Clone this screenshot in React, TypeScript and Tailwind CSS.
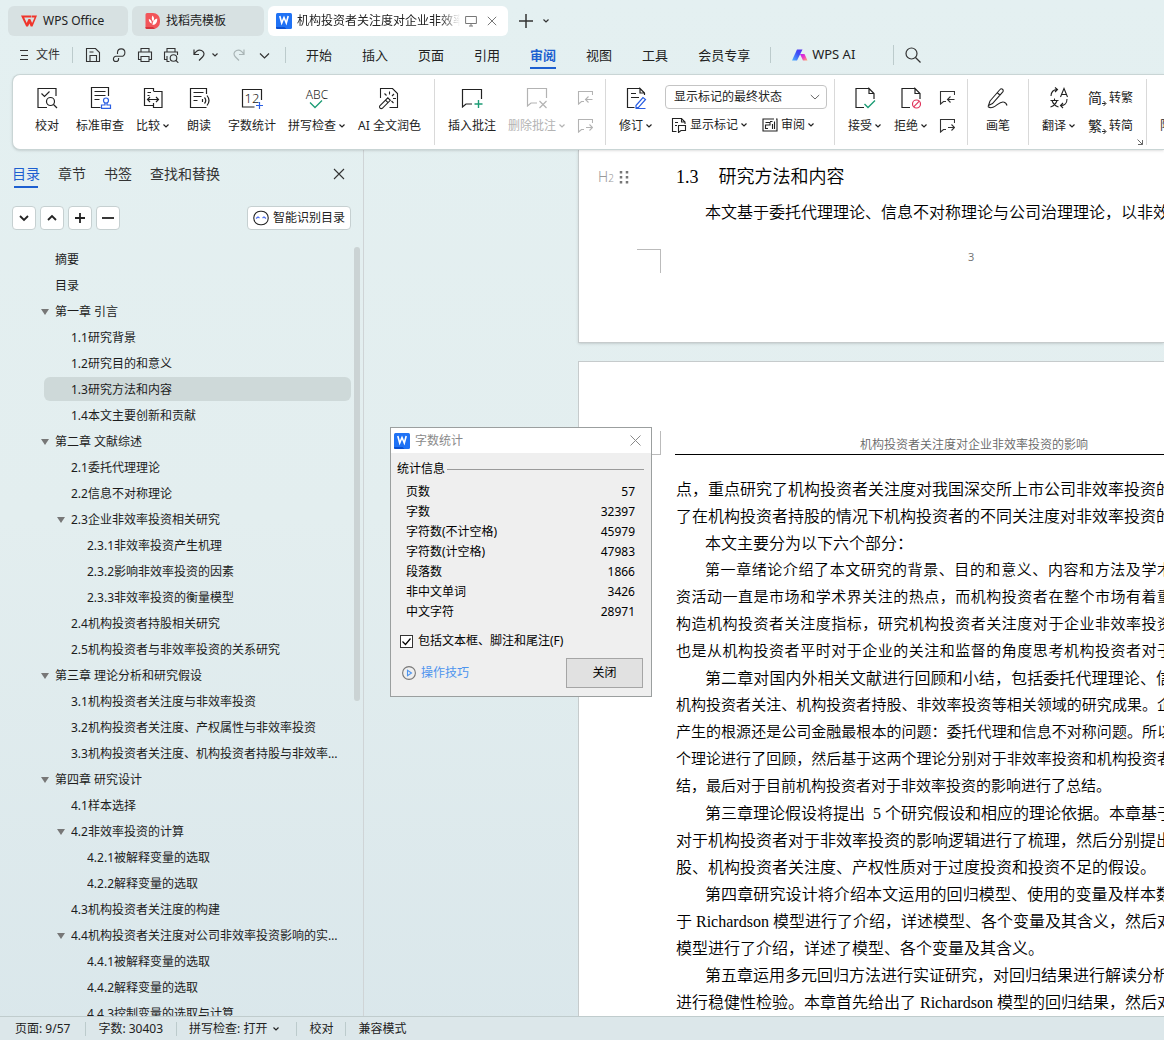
import React from "react";

const UI = "font-['Noto_Sans','Noto_Sans_CJK_SC',sans-serif]";
const SONG = "font-['Liberation_Serif','Noto_Sans_CJK_SC',serif]";

function Svg({ s = 24, className = "", children }: { s?: number; className?: string; children: React.ReactNode }) {
  return (
    <svg
      width={s}
      height={s}
      viewBox={`0 0 ${s} ${s}`}
      fill="none"
      stroke="currentColor"
      strokeWidth="1.2"
      className={"block shrink-0 " + className}
      aria-hidden="true"
    >
      {children}
    </svg>
  );
}

const Chevron = ({ className = "" }: { className?: string }) => (
  <svg width="8" height="6" viewBox="0 0 8 6" fill="none" stroke="currentColor" strokeWidth="1.2" className={"shrink-0 " + className} aria-hidden="true">
    <path d="M1.5 1.5 4 4 6.5 1.5" />
  </svg>
);

const WordLogo = () => (
  <svg width="16" height="16" viewBox="0 0 16 16" className="block shrink-0" aria-hidden="true">
    <rect width="16" height="16" rx="1.5" fill="#1f72f5" />
    <path d="M0 14h8.500l2 2H1.500A1.500 1.500 0 0 1 0 14.500z" fill="#0a50d0" />
    <path d="M3.800 3 5.700 10 8 4.500 10.300 10 12.200 3" fill="none" stroke="#fff" strokeWidth="1.600" />
  </svg>
);

/* ---------- title tabs ---------- */
function TitleTabs() {
  return (
    <div className="flex items-center pt-1.5 pl-2 text-xs text-[#222]">
      <button className="flex h-[30px] w-[120px] items-center rounded-md bg-[#d7e1e2] pl-[13px]">
        <svg width="16" height="12" viewBox="0 0 16 12" aria-hidden="true">
          <path d="M0 .5h10.500v2H3.200l2.500 5.500 1.800-4h1.800l1.800 4 2.500-5.500H11v-2h5l-4.500 11h-1.800L8.400 8.500 7 11.500H5.200z" fill="#f0352b" />
        </svg>
        <span className="ml-[6px]">WPS Office</span>
      </button>
      <button className="ml-1 flex h-[30px] w-[132px] items-center rounded-md bg-[#d7e1e2] pl-[13px]">
        <svg width="16" height="16" viewBox="0 0 16 16" aria-hidden="true">
          <path d="M2 0h6a7 7 0 0 1 7 7v2a7 7 0 0 1-7 7H2a1.500 1.500 0 0 1-1.500-1.500v-13A1.500 1.500 0 0 1 2 0z" fill="#f2555a" />
          <path d="M.5 14H8l2 2H2a1.500 1.500 0 0 1-1.500-1.500z" fill="#d4343c" />
          <path d="M7.500 2.500c2 2 2 4 .5 6-1.500-2-1.500-4-.5-6zM3.800 6c2 .5 3 2 3 4.500C5 10 3.800 8.500 3.800 6zM12.200 5.500c.3 3.500-1.200 6.500-4.700 6.500 0-3.500 1.700-5.800 4.700-6.500z" fill="#fff" />
        </svg>
        <span className="ml-[5px]">找稻壳模板</span>
      </button>
      <div className="ml-1 flex h-[30px] w-60 items-center rounded-md bg-white pl-2">
        <WordLogo />
        <span className="ml-[5px] w-[163px] overflow-hidden whitespace-nowrap [mask-image:linear-gradient(to_right,#000_88%,transparent)]">
          机构投资者关注度对企业非效率投资的影响
        </span>
        <Svg s={12} className="ml-[5px] text-[#777]">
          <path d="M.6 1.500h10.800v7H.6zM4 11h4M6 8.500V11" strokeWidth="1" />
        </Svg>
        <button aria-label="关闭标签" className="ml-[10px] text-[#777]">
          <Svg s={10}><path d="m.8.8 8.400 8.400M9.200.8.8 9.200" strokeWidth="1" /></Svg>
        </button>
      </div>
      <button aria-label="新建" className="ml-[11px] text-[#333]">
        <Svg s={14}><path d="M7 0v14M0 7h14" strokeWidth="1.500" /></Svg>
      </button>
      <button aria-label="标签列表" className="ml-[9px] text-[#333]"><Chevron /></button>
    </div>
  );
}

/* ---------- menu row ---------- */
const Sep = ({ className }: { className: string }) => <div className={"w-px shrink-0 bg-[#bccbcc] " + className} />;

function MenuRow() {
  const tabs = ["开始", "插入", "页面", "引用", "审阅", "视图", "工具", "会员专享"];
  return (
    <div className="flex h-[38px] shrink-0 items-center pl-5 text-[#333]">
      <button className="flex items-center gap-[6px] text-xs">
        <Svg s={10}><path d="M0 .5h8M1 5.500h7M0 9.500h8" strokeWidth="1" /></Svg>
        文件
      </button>
      <Sep className="mr-3 ml-3 h-4" />
      <div className="flex items-center gap-[10px]">
        <button aria-label="保存">
          <Svg s={16}><path d="M1.500 1.500h9l4 4v9h-13zM5 14.500V8.500h6.500v6M4.500 5h4" strokeWidth="1.100" /></Svg>
        </button>
        <button aria-label="输出为PDF">
          <Svg s={16}><path d="M6.500 7V5.300a3.700 3.700 0 1 1 3.700 4H5a2.600 2.600 0 1 0 2.600 2.600v-1" strokeWidth="1.100" /></Svg>
        </button>
        <button aria-label="打印">
          <Svg s={16}><path d="M4 5V1.500h8V5M4 12.500H1.500V5h13v7.500H12M4 9.500h8v5H4z" strokeWidth="1.100" /></Svg>
        </button>
        <button aria-label="打印预览">
          <Svg s={16}><path d="M4 5V1.500h8V5M4 12.500H1.500V5h13v3M4 9v5.500h2.500" strokeWidth="1.100" /><circle cx="10.500" cy="11" r="3.300" strokeWidth="1.100" /><path d="m13 13.500 2.300 2.300" strokeWidth="1.100" /></Svg>
        </button>
      </div>
      <button aria-label="撤销" className="ml-[14px] flex items-center gap-[6px]">
        <Svg s={12}><path d="M1 .5v5h5M1 5.500C3 2 6 .5 8.500 1.500s3.500 4 1 6.500L6 11.500" strokeWidth="1.200" /></Svg>
        <Chevron />
      </button>
      <button aria-label="恢复" className="ml-[14px] text-[#a9b5b6]">
        <Svg s={12}><path d="M11 .5v5H6M11 5.500C9 2 6 .5 3.500 1.500S0 5.500 2.500 8L6 11.500" strokeWidth="1.200" /></Svg>
      </button>
      <button aria-label="更多" className="ml-[14px]">
        <Svg s={11}><path d="m1 3.500 4.500 4.500L10 3.500" /></Svg>
      </button>
      <Sep className="ml-[15px] h-4" />
      <nav className="ml-5 flex gap-[30px] text-[13px] leading-5">
        {tabs.map((t) => (
          <button
            key={t}
            className={
              t === "审阅"
                ? "relative font-bold text-[#1d5fd0] after:absolute after:inset-x-0 after:top-[22px] after:h-[2px] after:bg-[#1d5fd0]"
                : "relative text-[#222]"
            }
          >
            {t}
          </button>
        ))}
      </nav>
      <Sep className="ml-5 h-4" />
      <button className="ml-[21px] flex items-center gap-1 text-[13px] text-[#222]">
        <svg width="16" height="12" viewBox="0 0 16 12" aria-hidden="true">
          <defs>
            <linearGradient id="ai1" x1="0" y1="1" x2="1" y2="0"><stop stopColor="#4fb4ff" /><stop offset=".6" stopColor="#3f4df5" /><stop offset="1" stopColor="#5a2df0" /></linearGradient>
            <linearGradient id="ai2" x1="0" y1="0" x2="1" y2="1"><stop stopColor="#b41cf5" /><stop offset=".5" stopColor="#f03cc0" /><stop offset="1" stopColor="#ffb070" /></linearGradient>
          </defs>
          <path d="M5 .5h5.500L5 11.500H0z" fill="url(#ai1)" />
          <path d="M8 5h4.500l3 6.500h-4.500z" fill="url(#ai2)" />
        </svg>
        WPS AI
      </button>
      <Sep className="ml-[38px] h-5" />
      <button aria-label="搜索" className="ml-[11px]">
        <Svg s={16}><circle cx="6.500" cy="6.500" r="5.500" /><path d="m10.500 10.500 5 5" /></Svg>
      </button>
    </div>
  );
}

/* ---------- ribbon ---------- */
function Tool({ label, drop, dim, children }: { label: string; drop?: boolean; dim?: boolean; children: React.ReactNode }) {
  return (
    <button
      className={
        "flex min-w-[46px] shrink-0 flex-col items-center gap-2 px-[6px] pt-[11px] text-xs leading-4 whitespace-nowrap " +
        (dim ? "text-[#b3b3b3]" : "text-[#222]")
      }
    >
      <Svg>{children}</Svg>
      <span className="flex items-center gap-[2px]">
        {label}
        {drop && <Chevron />}
      </span>
    </button>
  );
}

const GroupSep = () => <div className="mx-[7px] mt-1 h-[66px] w-px shrink-0 bg-[#d9d9d9]" />;

const bubble = "M13.500 3H1.500v13.500l3.500-3H7";
const PrevNext = ({ dim }: { dim?: boolean }) => (
  <div className={"flex shrink-0 flex-col gap-3 px-[5px] pt-[15px] " + (dim ? "text-[#b3b3b3]" : "text-[#333]")}>
    <button aria-label="上一条"><Svg s={16}><path d="M15.500 5V1.500h-14V14l3-2.500H7M15.500 9.500H9m2.500-3-3 3 3 3" strokeWidth="1.100" /></Svg></button>
    <button aria-label="下一条"><Svg s={16}><path d="M15.500 5V1.500h-14V14l3-2.500H7M9 9.500h6m-2.500-3 3 3-3 3" strokeWidth="1.100" /></Svg></button>
  </div>
);

function Convert({ glyph, label }: { glyph: string; label: string }) {
  return (
    <button className="flex items-center">
      <span className="w-[14px] text-sm leading-4">{glyph}</span>
      <svg width="7" height="16" viewBox="0 0 7 16" fill="none" stroke="currentColor" className="shrink-0" aria-hidden="true">
        <path d="M-1 13.500h4.500M1.500 11l2.500 2.500L1.500 16" />
      </svg>
      <span className="whitespace-nowrap">{label}</span>
    </button>
  );
}

const docPath = "M16 2.500H3v19h8M21 13V7.500l-5-5v5h5";

function Ribbon() {
  return (
    <div className="relative z-10 ml-3 flex h-[76px] shrink-0 overflow-hidden rounded-l-lg border border-r-0 border-[#c9d5d5] bg-white pl-[11px] shadow-sm">
      <Tool label="校对">
        <path d="M21 10V2.500H3v19h9" /><path d="m6.500 7.500 3 3 5-5" /><circle cx="15.500" cy="15.500" r="4" /><path d="m18.500 18.500 3.500 3.500" />
      </Tool>
      <Tool label="标准审查">
        <path d="M20.500 10V1.500h-17v20h9M6.500 5.500h11M6.500 9.500h11M6.500 13.500h5" />
        <g stroke="#2b5fe3"><circle cx="18" cy="14.500" r="2.500" /><path d="M17 17v2h-3.500v3.300h9V19H19v-2" /></g>
      </Tool>
      <Tool label="比较" drop>
        <path d="M12.500 5V2.500h-9v17h9M12.500 5.500h8.500v16h-8.500V17M6.500 6.500h3.500M6.500 9.500h2M6.500 13.500h11M9 11l-2.500 2.500L9 16M15 11l2.500 2.500L15 16" />
      </Tool>
      <Tool label="朗读">
        <path d="M19.500 8V2.500h-16v19h16M6.500 6.500h10M6.500 10.500h8M6.500 14.500h4M15.500 13v3M17.500 11.500q2.500 3 0 6M20 9.500q4 5 0 10" />
      </Tool>
      <Tool label="字数统计">
        <path d="M21.500 14V3.500h-19V21h12" />
        <path d="M19.500 16v7M16 19.500h7" stroke="#2b5fe3" />
        <text x="4.500" y="16.500" fontSize="13" fontWeight="300" fill="currentColor" stroke="none">12</text>
      </Tool>
      <Tool label="拼写检查" drop>
        <text x="12" y="13" textAnchor="middle" fontSize="12" fontWeight="300" fill="currentColor" stroke="none">ABC</text>
        <path d="m5 16.500 5 5 7-7" stroke="#1c9c75" strokeWidth="1.300" />
      </Tool>
      <Tool label="AI 全文润色">
        <path d="M3.500 12V2.500h12l5 5v14h-8M2.800 19.800l8-8 2.500 2.500-8 8a1.800 1.800 0 0 1-2.500-2.500zM12.500 5.500v3M7.500 7.500l2 2M17 8l-2 2M16 12.500h3M14.500 15l2 2M8.500 14.200l2.500 2.500" strokeWidth="1.100" />
      </Tool>
      <GroupSep />
      <Tool label="插入批注">
        <path d="M21.500 13V3.500h-19v17.500l3.500-3h6" /><path d="M18.500 14v8M14.500 18h8" stroke="#1c9c75" strokeWidth="1.400" />
      </Tool>
      <Tool label="删除批注" drop dim>
        <path d="M21.500 12V2.500h-19v17.500l3.500-3h6M14.500 15l7 7M21.500 15l-7 7" />
      </Tool>
      <PrevNext dim />
      <GroupSep />
      <Tool label="修订" drop>
        <path d="M16 2.500H3.500v19h7M20.500 9V7l-4.500-4.500V7h4.500M7 7.500h5M7 11.500h8" />
        <path d="m12 19.500 7-8 2.500 2-7 8H12zM11.500 22.500h10" stroke="#2b5fe3" />
      </Tool>
      <div className="flex shrink-0 flex-col gap-2 px-[6px] pt-[10px] text-xs leading-4 text-[#222]">
        <div className="relative flex items-center">
          <select aria-label="显示标记状态" className="h-6 w-[162px] appearance-none rounded-[4px] border border-[#c4c4c4] bg-white pl-2 text-xs leading-4">
            <option>显示标记的最终状态</option>
          </select>
          <Svg s={10} className="pointer-events-none absolute right-[7px] text-[#666]"><path d="m.8 3 4.200 4L9.200 3" strokeWidth="1" /></Svg>
        </div>
        <div className="flex gap-[14px] pl-[6px]">
          <button className="flex items-center">
            <Svg s={16}><path d="M5.500 14.500h-4v-13h9l3.500 3.500v2M10.500 1.500V5H14M4 5.500h3M4 8.500h2M7.500 8.500h7v5h-4.500l-2.500 2z" strokeWidth="1.100" /></Svg>
            <span className="mr-[2px] ml-[3px]">显示标记</span><Chevron />
          </button>
          <button className="flex items-center">
            <Svg s={16}><path d="M12 2H1v12h14V2h-1M3.500 5.500H8V8H3.500v3.500H6M10.500 4.500H8M12.500 4.500v7.500M10.500 7v5" strokeWidth="1.100" /></Svg>
            <span className="mr-[2px] ml-[3px]">审阅</span><Chevron />
          </button>
        </div>
      </div>
      <div className="mt-1 mr-[7px] ml-px h-[66px] w-px shrink-0 bg-[#d9d9d9]" />
      <Tool label="接受" drop>
        <path d={docPath} /><path d="m11.500 18 3.500 3.500 7-7" stroke="#1c9c75" strokeWidth="1.400" />
      </Tool>
      <Tool label="拒绝" drop>
        <path d={docPath} /><g stroke="#e0355c"><circle cx="17.500" cy="18" r="4" /><path d="m14.700 20.800 5.600-5.600" /></g>
      </Tool>
      <PrevNext />
      <GroupSep />
      <Tool label="画笔">
        <path d="M4 15 14 3.500a1.800 1.800 0 0 1 2.800 2.300L6.500 17.500l-4 2zM2 20.500c1.500 1.500 3 1.500 5 .8 4-1.500 6.500-6 10.500-5.300 2 .3 3 1.800 3.500 3.500M11.500 7l2.500 2" strokeWidth="1.100" />
      </Tool>
      <GroupSep />
      <Tool label="翻译" drop>
        <path d="M4 10c0-4 2.500-6.500 6-6.500M8 1.500l2.500 2L8 6M13.500 11 17 2.500l3.500 8.500M14.700 8.500h4.600M3.500 14.500h8M7.500 12.500v2M10 14.500c-1 3.500-3.500 5.500-6.500 6.500M5 14.500c1 3.500 3.500 5.500 6.500 6.500M20 13c0 4-2.500 6.500-6 6.500M16 17l-2.500 2.500L16 22" strokeWidth="1.100" />
      </Tool>
      <div className="flex shrink-0 flex-col gap-3 pt-[15px] pr-[13px] pl-[6px] text-xs leading-4 text-[#222]">
        <Convert glyph="简" label="转繁" />
        <Convert glyph="繁" label="转简" />
      </div>
      <div className="relative mt-1 h-[66px] w-px shrink-0 bg-[#d9d9d9]">
        <Svg s={6} className="absolute right-[4px] bottom-0 text-[#666]"><path d="m.5.5 5 5M5.500 1v4.500H1" strokeWidth="1" /></Svg>
      </div>
      <div className="w-[7px] shrink-0" />
      <Tool label="限制编辑"><path d={bubble} className="invisible" /></Tool>
    </div>
  );
}

/* ---------- outline pane ---------- */
type Entry = { t: string; l: number; open?: boolean };
const entries: Entry[] = [
  { t: "摘要", l: 0 },
  { t: "目录", l: 0 },
  { t: "第一章 引言", l: 0, open: true },
  { t: "1.1研究背景", l: 1 },
  { t: "1.2研究目的和意义", l: 1 },
  { t: "1.3研究方法和内容", l: 1 },
  { t: "1.4本文主要创新和贡献", l: 1 },
  { t: "第二章 文献综述", l: 0, open: true },
  { t: "2.1委托代理理论", l: 1 },
  { t: "2.2信息不对称理论", l: 1 },
  { t: "2.3企业非效率投资相关研究", l: 1, open: true },
  { t: "2.3.1非效率投资产生机理", l: 2 },
  { t: "2.3.2影响非效率投资的因素", l: 2 },
  { t: "2.3.3非效率投资的衡量模型", l: 2 },
  { t: "2.4机构投资者持股相关研究", l: 1 },
  { t: "2.5机构投资者与非效率投资的关系研究", l: 1 },
  { t: "第三章 理论分析和研究假设", l: 0, open: true },
  { t: "3.1机构投资者关注度与非效率投资", l: 1 },
  { t: "3.2机构投资者关注度、产权属性与非效率投资", l: 1 },
  { t: "3.3机构投资者关注度、机构投资者持股与非效率投资", l: 1 },
  { t: "第四章 研究设计", l: 0, open: true },
  { t: "4.1样本选择", l: 1 },
  { t: "4.2非效率投资的计算", l: 1, open: true },
  { t: "4.2.1被解释变量的选取", l: 2 },
  { t: "4.2.2解释变量的选取", l: 2 },
  { t: "4.3机构投资者关注度的构建", l: 1 },
  { t: "4.4机构投资者关注度对公司非效率投资影响的实证研究", l: 1, open: true },
  { t: "4.4.1被解释变量的选取", l: 2 },
  { t: "4.4.2解释变量的选取", l: 2 },
  { t: "4.4.3控制变量的选取与计算", l: 2 },
];
const indent = ["pl-0", "pl-4", "pl-8"];

function Outline() {
  const box = "flex h-6 w-6 items-center justify-center rounded-[4px] border border-[#c6d0d1] bg-white text-[#222]";
  return (
    <aside className="flex w-[364px] shrink-0 flex-col border-r border-[#cfd4d6]">
      <div className="flex items-center gap-[18px] pt-[14px] pr-[18px] pl-3 text-sm leading-5 text-[#333]">
        <button className="relative text-[#1d5fd0] after:absolute after:inset-x-[2px] after:top-[22px] after:h-[2px] after:bg-[#1d5fd0]">目录</button>
        <button>章节</button>
        <button>书签</button>
        <button>查找和替换</button>
        <button aria-label="关闭窗格" className="ml-auto"><Svg s={12}><path d="m1 1 10 10M11 1 1 11" strokeWidth="1.100" /></Svg></button>
      </div>
      <div className="mt-[22px] flex gap-1 pr-3 pl-3">
        <button aria-label="展开" className={box}><Svg s={10}><path d="m1 3 4 4 4-4" strokeWidth="1.800" /></Svg></button>
        <button aria-label="收起" className={box}><Svg s={10}><path d="m1 7 4-4 4 4" strokeWidth="1.800" /></Svg></button>
        <button aria-label="提升" className={box}><Svg s={10}><path d="M0 5h10M5 0v10" strokeWidth="1.800" /></Svg></button>
        <button aria-label="降低" className={box}><Svg s={12}><path d="M0 6h12" strokeWidth="1.800" /></Svg></button>
        <button className="ml-auto flex h-6 items-center gap-1 rounded-[4px] border border-[#c6d0d1] bg-white px-[5px] text-xs text-[#222]">
          <Svg s={16}><rect x=".8" y="1.300" width="14.400" height="13.400" rx="6.500" strokeWidth="1.100" /><path d="M3 8.500 5 7l1.500 1M9.500 8 11 7l2 1.500" stroke="#4a6cf0" /></Svg>
          智能识别目录
        </button>
      </div>
      <div className="mt-[17px] flex min-h-0 flex-1 overflow-hidden pl-[39px]">
        <ul className="min-w-0 flex-1 text-xs leading-[26px] text-[#1c1c1c]">
          {entries.map((e) => (
            <li key={e.t} className={indent[e.l]}>
              <button
                className={
                  "relative flex w-full items-center text-left " +
                  (e.t.startsWith("1.3")
                    ? "before:absolute before:top-0 before:right-0 before:bottom-[2px] before:-left-[11px] before:rounded-md before:bg-[#ced9d9]"
                    : "")
                }
              >
                <span className="flex w-4 shrink-0">
                  {e.open && <svg width="8" height="6" viewBox="0 0 8 6" className="ml-[2px]" aria-hidden="true"><path d="M0 0h8L4 6z" fill="#777" /></svg>}
                </span>
                <span className="relative mr-[6px] truncate">{e.t}</span>
              </button>
            </li>
          ))}
        </ul>
        <div className="mr-[3px] ml-[3px] h-[454px] w-[6px] rounded-full bg-[#cbd3d4]" />
      </div>
    </aside>
  );
}

/* ---------- document ---------- */
type Line = { t: string; kind: "full" | "tight" | "end" | "tightEnd"; first?: boolean };
const lines: Line[] = [
  { t: "点,重点研究了机构投资者关注度对我国深交所上市公司非效率投资的", kind: "full" },
  { t: "了在机构投资者持股的情况下机构投资者的不同关注度对非效率投资的", kind: "full" },
  { t: "本文主要分为以下六个部分:", kind: "end", first: true },
  { t: "第一章绪论介绍了本文研究的背景、目的和意义、内容和方法及学术", kind: "tight", first: true },
  { t: "资活动一直是市场和学术界关注的热点,而机构投资者在整个市场有着重", kind: "tight" },
  { t: "构造机构投资者关注度指标,研究机构投资者关注度对于企业非效率投资", kind: "tight" },
  { t: "也是从机构投资者平时对于企业的关注和监督的角度思考机构投资者对于", kind: "tight" },
  { t: "第二章对国内外相关文献进行回顾和小结,包括委托代理理论、信", kind: "full", first: true },
  { t: "机构投资者关注、机构投资者持股、非效率投资等相关领域的研究成果。企", kind: "tight" },
  { t: "产生的根源还是公司金融最根本的问题:委托代理和信息不对称问题。所以", kind: "tight" },
  { t: "个理论进行了回顾,然后基于这两个理论分别对于非效率投资和机构投资者", kind: "tight" },
  { t: "结,最后对于目前机构投资者对于非效率投资的影响进行了总结。", kind: "tightEnd" },
  { t: "第三章理论假设将提出  5 个研究假设和相应的理论依据。本章基于", kind: "full", first: true },
  { t: "对于机构投资者对于非效率投资的影响逻辑进行了梳理,然后分别提出", kind: "full" },
  { t: "股、机构投资者关注度、产权性质对于过度投资和投资不足的假设。", kind: "end" },
  { t: "第四章研究设计将介绍本文运用的回归模型、使用的变量及样本数", kind: "full", first: true },
  { t: "于 Richardson 模型进行了介绍,详述模型、各个变量及其含义,然后对", kind: "full" },
  { t: "模型进行了介绍,详述了模型、各个变量及其含义。", kind: "end" },
  { t: "第五章运用多元回归方法进行实证研究,对回归结果进行解读分析,", kind: "full", first: true },
  { t: "进行稳健性检验。本章首先给出了 Richardson 模型的回归结果,然后对", kind: "full" },
];
const kinds = {
  full: "text-base leading-[27px] [text-align-last:justify]",
  tight: "text-[15px] leading-[27px] [text-align-last:justify]",
  end: "text-base leading-[27px]",
  tightEnd: "text-[15px] leading-[27px]",
};
const wide = (s: string) => s.replace(/,/g, "\uff0c").replace(/:/g, "\uff1a");

function Document() {
  return (
    <main className="flex min-w-0 flex-1 flex-col overflow-hidden pl-[214px]">
      <section className="flex h-[193px] shrink-0 flex-col border-b border-l border-[#c6cbcc] bg-white shadow-sm">
        <div className="flex items-center pt-[15px] pl-[19px] leading-6">
          <span className="flex w-[78px] items-center gap-[3px] text-sm text-[#999]">
            <span className="font-light">H<sub className="bottom-0 text-[10px]">2</sub></span>
            <Svg s={14}><path d="M4 1v13M10 1v13" strokeWidth="2.500" strokeDasharray="2.500 2.500" stroke="#777" /></Svg>
          </span>
          <h2 className={SONG + " flex gap-5 text-lg leading-6 font-[350] text-black"}><span className="font-normal">1.3</span>研究方法和内容</h2>
        </div>
        <p className={SONG + " mt-[10px] -mr-2 pl-[126px] text-base leading-[27px] font-[350] whitespace-nowrap text-black"}>
          {wide("本文基于委托代理理论、信息不对称理论与公司治理理论,以非效率")}
        </p>
        <div className="mt-[23px] flex text-[11px] leading-4 text-[#777]">
          <span className="ml-[58px] h-6 w-6 border-t border-r border-[#bbb]" />
          <span className="ml-[307px]">3</span>
        </div>
      </section>
      <section className="mt-[18px] flex flex-1 flex-col border-t border-l border-[#c6cbcc] bg-white">
        <div className="mt-[69px] flex">
          <span className="ml-[58px] h-6 w-6 shrink-0 border-r border-b border-[#bbb]" />
          <div className="ml-[14px] min-w-0 flex-1 border-b border-black pt-[5px] pl-[185px] text-xs leading-[17px] font-[350] whitespace-nowrap text-[#666]">
            机构投资者关注度对企业非效率投资的影响
          </div>
        </div>
        <div className={SONG + " mt-[21px] -mr-2 pl-[97px] font-[350] text-black"}>
          {lines.map((l) => (
            <p key={l.t} className={kinds[l.kind] + " whitespace-pre " + (l.first ? "pl-[29px]" : "")}>
              {wide(l.t)}
            </p>
          ))}
        </div>
      </section>
    </main>
  );
}

/* ---------- word count dialog ---------- */
const stats: [string, number][] = [
  ["页数", 57],
  ["字数", 32397],
  ["字符数(不计空格)", 45979],
  ["字符数(计空格)", 47983],
  ["段落数", 1866],
  ["非中文单词", 3426],
  ["中文字符", 28971],
];

function CountDialog() {
  return (
    <div role="dialog" aria-label="字数统计" className="absolute top-[427px] left-[390px] z-20 w-[262px] border border-[#9b9f9f] bg-[#efefef] pb-2 text-xs text-black">
      <div className="flex h-[25px] items-center bg-white pr-[10px] pl-[3px] text-[#8a8a8a]">
        <WordLogo />
        <span className="ml-[5px]">字数统计</span>
        <button aria-label="关闭对话框" className="ml-auto"><Svg s={11}><path d="m.5.5 10 10M10.500.5l-10 10" strokeWidth="1" /></Svg></button>
      </div>
      <div className="flex items-center gap-[2px] pt-2 pr-[7px] pl-[6px] leading-4">
        统计信息<span className="h-px flex-1 bg-[#9a9a9a]" />
      </div>
      <table className="mt-[5px] w-full leading-5">
        <tbody>
          {stats.map(([k, v]) => (
            <tr key={k}>
              <th scope="row" className="p-0 pl-[15px] text-left font-normal">{k}</th>
              <td className="p-0 pr-4 text-right">{v}</td>
            </tr>
          ))}
        </tbody>
      </table>
      <label className="mt-[11px] flex items-center gap-[5px] pl-[9px] leading-4">
        <span className="relative flex">
          <input type="checkbox" defaultChecked className="peer h-[13px] w-[13px] appearance-none border border-[#333] bg-white" />
          <Svg s={13} className="pointer-events-none invisible absolute inset-0 peer-checked:visible"><path d="m2.500 6.500 3 3 5-6" /></Svg>
        </span>
        包括文本框、脚注和尾注(F)
      </label>
      <div className="mt-[9px] flex items-center justify-between pr-2 pl-[11px]">
        <a href="#tips" className="flex items-center gap-[5px] text-[#4d94ee]">
          <Svg s={14}><circle cx="7" cy="7" r="6.400" stroke="#777" strokeWidth="1.100" /><path d="M5.500 4.300v5.400L9.500 7z" strokeWidth="1.100" /></Svg>
          操作技巧
        </a>
        <button className="h-[30px] w-[77px] border border-[#a5a5a5] bg-[#e1e1e1]">关闭</button>
      </div>
    </div>
  );
}

function StatusBar() {
  const s = "border-l border-[#bccbcc] pl-3";
  return (
    <footer className="flex h-6 shrink-0 items-center border-t border-[#c0cccd] bg-[#dce7ea] pl-[15px] text-xs leading-[14px] text-[#222]">
      <span className="pr-[15px]">页面: 9/57</span>
      <span className={s + " pr-[13px]"}>字数: 30403</span>
      <button className={s + " flex items-center gap-[5px] pr-4"}>拼写检查: 打开 <Chevron /></button>
      <button className={s + " pr-3"}>校对</button>
      <button className={s}>兼容模式</button>
    </footer>
  );
}

export default function App() {
  return (
    <div className={UI + " relative flex h-screen flex-col overflow-hidden bg-linear-to-b from-[#e4f0f1] via-[#e3eeef] to-[#dae7eb]"}>
      <TitleTabs />
      <MenuRow />
      <Ribbon />
      <div className="flex min-h-0 flex-1">
        <Outline />
        <Document />
      </div>
      <StatusBar />
      <CountDialog />
    </div>
  );
}
